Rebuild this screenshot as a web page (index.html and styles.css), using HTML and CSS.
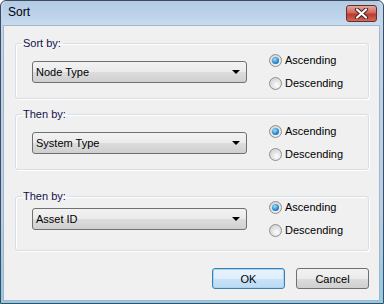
FILE: index.html
```html
<!DOCTYPE html>
<html lang="en">
<head>
    <meta charset="UTF-8">
    <title>Sort</title>
    <link rel="stylesheet" href="styles.css">
</head>
<body>
    <div class="window">
        <div class="titlebar">
            <span class="title">Sort</span>
            <button class="close-btn">
                <svg width="15" height="11" viewBox="0 0 15 11">
                    <path d="M3 1.5 L12 9.5 M12 1.5 L3 9.5" stroke="#4a2420" stroke-width="4.2" stroke-linecap="round"/>
                    <path d="M3 1.5 L12 9.5 M12 1.5 L3 9.5" stroke="#ffffff" stroke-width="2.2" stroke-linecap="round"/>
                </svg>
            </button>
        </div>

        <div class="client">
            <fieldset class="group">
                <legend>Sort by:</legend>
                <div class="combo"><span>Node Type</span><span class="arrow"></span></div>
                <div class="radios">
                    <label class="radio"><span class="dot checked"></span>Ascending</label>
                    <label class="radio"><span class="dot"></span>Descending</label>
                </div>
            </fieldset>

            <fieldset class="group">
                <legend>Then by:</legend>
                <div class="combo"><span>System Type</span><span class="arrow"></span></div>
                <div class="radios">
                    <label class="radio"><span class="dot checked"></span>Ascending</label>
                    <label class="radio"><span class="dot"></span>Descending</label>
                </div>
            </fieldset>

            <fieldset class="group last">
                <legend>Then by:</legend>
                <div class="combo"><span>Asset ID</span><span class="arrow"></span></div>
                <div class="radios">
                    <label class="radio"><span class="dot checked"></span>Ascending</label>
                    <label class="radio"><span class="dot"></span>Descending</label>
                </div>
            </fieldset>

            <div class="buttons">
                <button class="btn default">OK</button>
                <button class="btn">Cancel</button>
            </div>
        </div>
    </div>
</body>
</html>
```

FILE: styles.css
```css
* {
    margin: 0;
    padding: 0;
    box-sizing: border-box;
}

body {
    background: #ffffff;
    font-family: "Liberation Sans", Arial, sans-serif;
    font-size: 11px;
    color: #000000;
}

.window {
    width: 384px;
    height: 304px;
    border: 1px solid #3e4c5e;
    border-radius: 6px 6px 0 0;
    background: linear-gradient(#c2d6ec, #b7cfe9 70%, #8ccbe6);
    padding: 0 3px 2px 2px;
    display: flex;
    flex-direction: column;
}

.titlebar {
    height: 24px;
    display: flex;
    align-items: center;
    justify-content: space-between;
    padding: 0 3px 2px 5px;
    background: linear-gradient(#b3cbe6, #bdd3ec 60%, #c8dbef);
    border-radius: 5px 5px 0 0;
}

.title {
    font-size: 12px;
    color: #000000;
}

.close-btn {
    width: 31px;
    height: 17px;
    border: 1px solid #6d2b26;
    border-radius: 3px;
    background: linear-gradient(#e3a89e, #d0675b 45%, #c0392d 55%, #cf6a58);
    display: flex;
    align-items: center;
    justify-content: center;
    margin-top: 2px;
}

.client {
    flex: 1;
    background: #f0f0f0;
    border: 1px solid #a4b6cb;
    padding: 11px 10px 0 11px;
}

.group {
    border: 1px solid #d5dfe5;
    border-radius: 3px;
    box-shadow: inset 1px 1px 0 #ffffff, 1px 1px 0 #ffffff;
    padding: 3px 10px 8px 16px;
    display: flex;
    align-items: center;
    margin-bottom: 9px;
}

.group.last {
    margin-top: 20px;
    padding-top: 0;
    padding-bottom: 13px;
}

.group legend {
    margin-left: -10px;
    padding: 0 2px 0 1px;
    line-height: 13px;
    color: #10104a;
}

.group.last legend {
    margin-bottom: -3px;
}

.combo {
    width: 215px;
    height: 22px;
    border: 1px solid #707070;
    border-radius: 3px;
    background: linear-gradient(#f2f2f2, #ebebeb 50%, #dddddd 50%, #cfcfcf);
    display: flex;
    align-items: center;
    padding: 0 6px 0 3px;
}

.arrow {
    margin-left: auto;
    border-top: 4px solid #000000;
    border-left: 4px solid transparent;
    border-right: 4px solid transparent;
}

.radios {
    margin-left: 22px;
    display: flex;
    flex-direction: column;
    gap: 9px;
}

.radio {
    display: flex;
    align-items: center;
    gap: 3px;
    height: 14px;
}

.dot {
    width: 13px;
    height: 13px;
    border-radius: 50%;
    border: 1px solid #8e8f8f;
    background: radial-gradient(circle at 60% 65%, #ffffff, #e6e6e6 40%, #c9c9c9);
    display: flex;
    align-items: center;
    justify-content: center;
}

.dot.checked::after {
    content: "";
    width: 7px;
    height: 7px;
    border-radius: 50%;
    background: radial-gradient(circle at 40% 35%, #a6e0fb, #2a8ad0 55%, #0c4f8f);
}

.buttons {
    display: flex;
    justify-content: flex-end;
    gap: 11px;
    margin-top: 17px;
}

.btn {
    width: 73px;
    height: 21px;
    border: 1px solid #707070;
    border-radius: 3px;
    background: linear-gradient(#f2f2f2, #ebebeb 50%, #dddddd 50%, #cfcfcf);
    font-family: "Liberation Sans", Arial, sans-serif;
    font-size: 11px;
    color: #000000;
}

.btn.default {
    border-color: #3c7fb1;
    background: linear-gradient(#eaf5fd, #dcedfb 50%, #c9e3f8 50%, #bcdaf3);
    box-shadow: inset 0 0 0 1px #a7d3f5;
}
```
